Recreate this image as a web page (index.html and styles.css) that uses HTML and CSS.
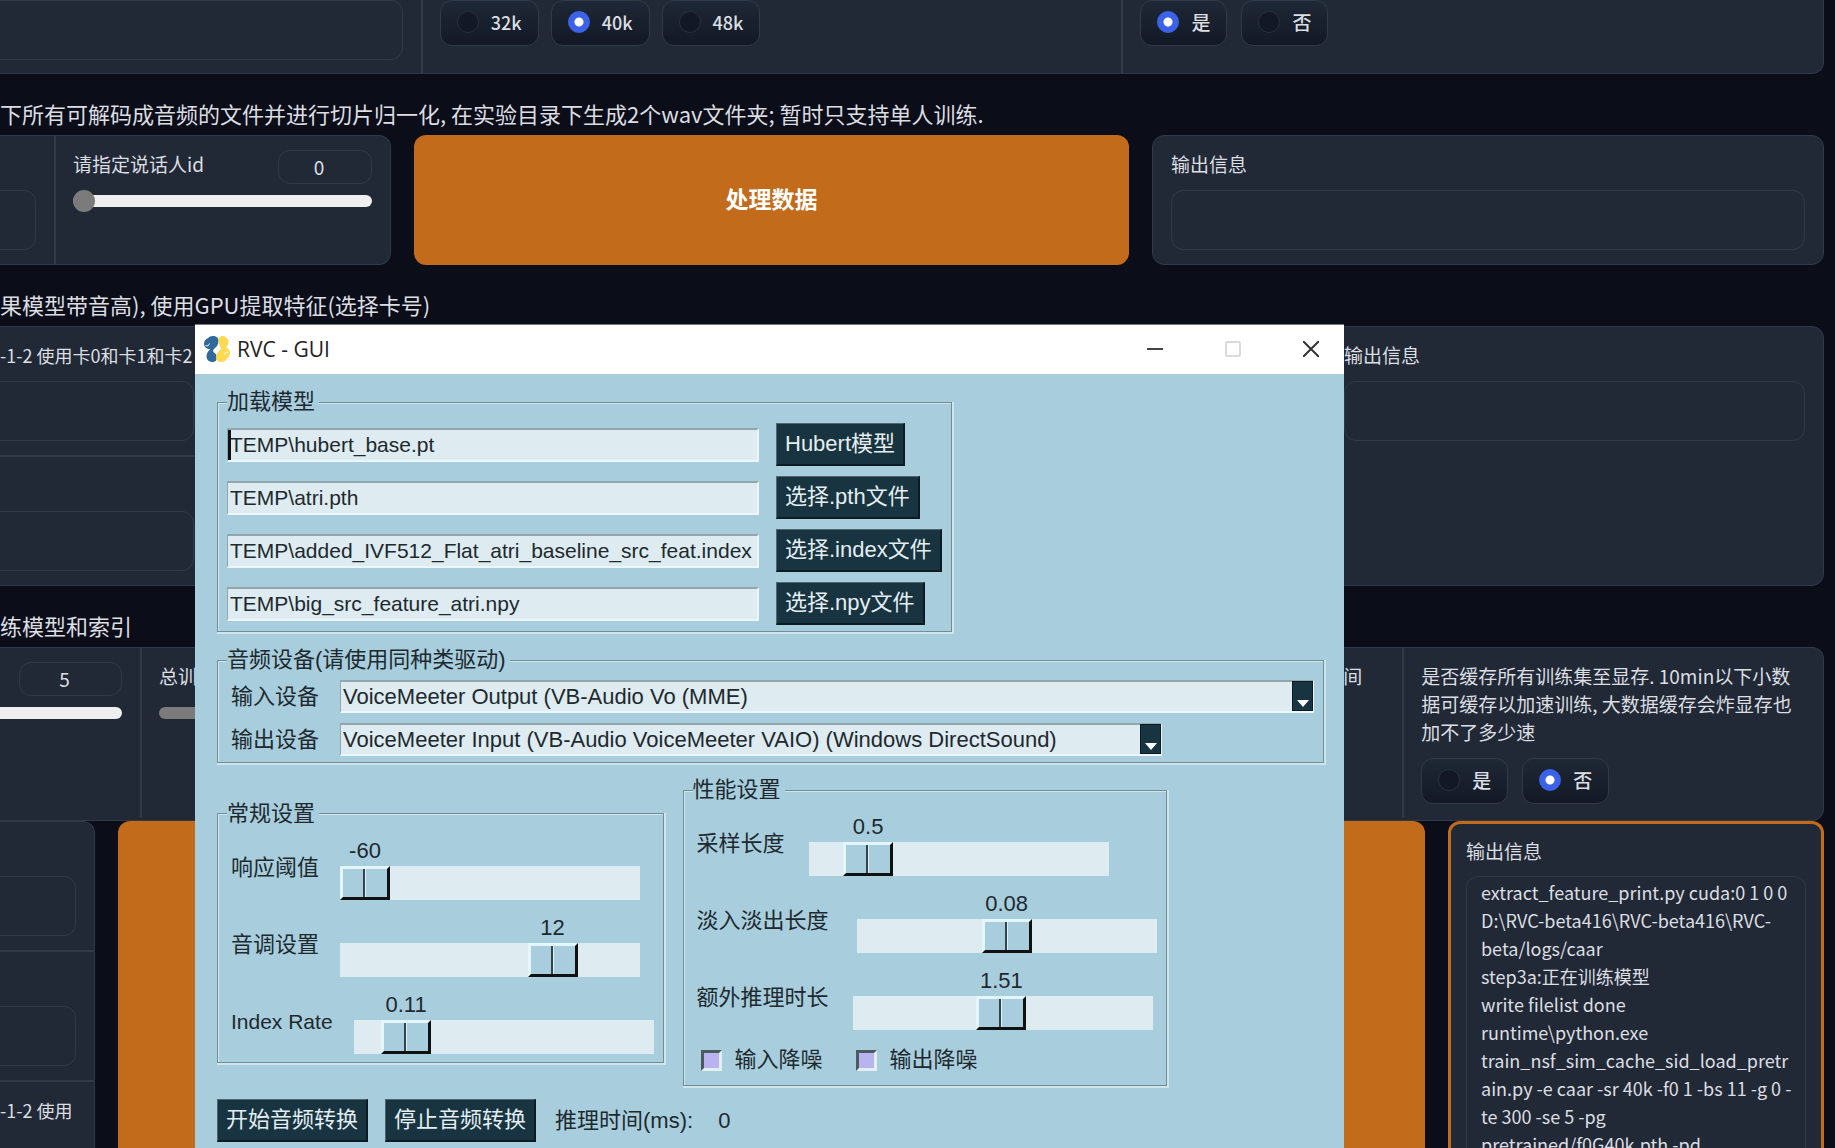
FILE: index.html
```html
<!DOCTYPE html>
<html lang="zh-CN">
<head>
<meta charset="utf-8">
<title>RVC WebUI</title>
<link rel="stylesheet" href="styles.css">
</head>
<body>
<main class="page">
  <div class="row row-basic">
    <div class="block"><input class="textbox bleed" type="text" aria-label="输入实验名"></div>
    <div class="block chips rates" role="radiogroup" aria-label="目标采样率">
      <label class="chip"><input type="radio" name="sr">32k</label>
      <label class="chip"><input type="radio" name="sr" checked>40k</label>
      <label class="chip"><input type="radio" name="sr">48k</label>
    </div>
    <div class="block chips" role="radiogroup" aria-label="模型是否带音高指导">
      <label class="chip"><input type="radio" name="f0" checked>是</label>
      <label class="chip"><input type="radio" name="f0">否</label>
    </div>
  </div>

  <p class="heading">下所有可解码成音频的文件并进行切片归一化, 在实验目录下生成2个wav文件夹; 暂时只支持单人训练.</p>
  <div class="row row-process">
    <div class="panel panel-cut cols-speaker">
      <div class="block"><div class="label"></div><input class="textbox bleed" type="text" aria-label="训练文件夹路径"></div>
      <div class="block">
        <div class="slider-head"><label class="label" for="spk">请指定说话人id</label><input class="number" type="text" value="0" aria-label="说话人id"></div>
        <input class="range" id="spk" type="range" min="0" max="4" value="0">
      </div>
    </div>
    <button class="action">处理数据</button>
    <div class="panel">
      <div class="block"><label class="label" for="out1">输出信息</label><input class="textbox" id="out1" type="text" readonly></div>
    </div>
  </div>

  <p class="heading">果模型带音高), 使用GPU提取特征(选择卡号)</p>
  <div class="row row-feature">
    <div class="panel panel-cut">
      <div class="block cut"><label class="label" for="gpus">-1-2 使用卡0和卡1和卡2</label><input class="textbox bleed" id="gpus" type="text"></div>
      <div class="block cut"><div class="label"></div><input class="textbox bleed" type="text" aria-label="显卡信息"></div>
    </div>
    <button class="action" aria-label="特征提取"></button>
    <div class="panel">
      <div class="block"><label class="label" for="out2">输出信息</label><input class="textbox" id="out2" type="text" readonly></div>
    </div>
  </div>

  <p class="heading">练模型和索引</p>
  <div class="panel panel-cut cols-train">
    <div class="block">
      <div class="slider-head"><input class="number wide" type="text" value="5" aria-label="保存频率"></div>
      <div class="bleed"><input class="range plain" type="range" min="0" max="50" value="0" aria-label="保存频率滑块"></div>
    </div>
    <div class="block">
      <div class="slider-head"><label class="label" for="epoch">总训练</label></div>
      <input class="range filled" id="epoch" type="range" min="0" max="1000" value="300">
    </div>
    <div class="block"></div>
    <div class="block"><div class="label">是否仅保存最新的ckpt文件以节省硬盘空间</div></div>
    <div class="block">
      <div class="label wrap">是否缓存所有训练集至显存. 10min以下小数<br>据可缓存以加速训练, 大数据缓存会炸显存也<br>加不了多少速</div>
      <div class="chips">
        <label class="chip"><input type="radio" name="cache">是</label>
        <label class="chip"><input type="radio" name="cache" checked>否</label>
      </div>
    </div>
  </div>

  <div class="row row-run">
    <div class="panel panel-cut">
      <div class="block cut"><div class="label"></div><input class="textbox bleed" type="text" aria-label="预训练底模G路径"></div>
      <div class="block cut"><div class="label"></div><input class="textbox bleed" type="text" aria-label="预训练底模D路径"></div>
      <div class="block cut"><div class="label">-1-2 使用</div></div>
    </div>
    <button class="action" aria-label="训练模型"></button>
    <div class="panel active">
      <label class="label" for="log">输出信息</label>
      <textarea class="log" id="log" readonly>extract_feature_print.py cuda:0 1 0 0
D:\RVC-beta416\RVC-beta416\RVC-
beta/logs/caar
step3a:正在训练模型
write filelist done
runtime\python.exe
train_nsf_sim_cache_sid_load_pretr
ain.py -e caar -sr 40k -f0 1 -bs 11 -g 0 -
te 300 -se 5 -pg
pretrained/f0G40k.pth -pd</textarea>
    </div>
  </div>
</main>

<section class="window" aria-label="RVC - GUI">
  <header class="titlebar">
    <svg class="logo" viewBox="0 0 26 26" aria-hidden="true">
      <path fill="#30699b" d="M9 0c3 0 5.500 1.500 5.500 4.500 0 3-1 5.500-3.500 7.500-2 1.600-2.500 3-1 4.500 1.400 1.400 3 2 3 4.500 0 3-1.500 5-4.500 5-3.500 0-6-2.500-6-5.500 0-2.500 1-4.500 2.500-6L6 13C3 13 0 11 0 8c0-3 1.500-4.500 3.500-5.500C5 .8 7 0 9 0z"/>
      <path fill="#ffd94f" d="M18 0c3.500 0 6.500 2.500 6.500 6 0 2-.8 3.500-2.500 5.500 2.500.8 4 2.500 4 5.500 0 2.500-1 4.500-3 5.500C22 24.500 20 26 17.500 26c-3.500 0-5.500-2-5.500-4.500 0-3 1-4.500 3-6.500 1.500-1.500 3-3 1.500-4.500C15.500 9 14.500 8 14.500 4.500 14.500 2 16 0 18 0z"/>
      <path fill="none" stroke="#fff" stroke-width="1" d="M1.500 9.500c2 1 3.500 0 4-2M24.500 16.500c-2-1-3.500 0-4 2"/>
    </svg>
    <h1>RVC - GUI</h1>
    <button class="winbtn" aria-label="最小化"><svg viewBox="0 0 16 16"><path d="M0 8h16" stroke="#444" stroke-width="2"/></svg></button>
    <button class="winbtn" aria-label="最大化" disabled><svg viewBox="0 0 16 16"><rect x="1" y="1" width="14" height="14" rx="1" fill="none" stroke="#dadada" stroke-width="2"/></svg></button>
    <button class="winbtn" aria-label="关闭"><svg viewBox="0 0 16 16"><path d="M0 0l16 16M16 0L0 16" stroke="#333" stroke-width="2"/></svg></button>
  </header>

  <div class="client">
    <fieldset class="models">
      <legend>加载模型</legend>
      <div class="file focus"><input type="text" value="TEMP\hubert_base.pt" aria-label="Hubert模型路径"><button class="tk">Hubert模型</button></div>
      <div class="file"><input type="text" value="TEMP\atri.pth" aria-label="pth路径"><button class="tk">选择.pth文件</button></div>
      <div class="file"><input type="text" value="TEMP\added_IVF512_Flat_atri_baseline_src_feat.index" aria-label="index路径"><button class="tk">选择.index文件</button></div>
      <div class="file"><input type="text" value="TEMP\big_src_feature_atri.npy" aria-label="npy路径"><button class="tk">选择.npy文件</button></div>
    </fieldset>

    <fieldset class="devices">
      <legend>音频设备(请使用同种类驱动)</legend>
      <div class="device">
        <label for="din">输入设备</label>
        <div class="combo"><select id="din"><option>VoiceMeeter Output (VB-Audio Vo (MME)</option></select><span class="arrow"></span></div>
      </div>
      <div class="device">
        <label for="dout">输出设备</label>
        <div class="combo short"><select id="dout"><option>VoiceMeeter Input (VB-Audio VoiceMeeter VAIO) (Windows DirectSound)</option></select><span class="arrow"></span></div>
      </div>
    </fieldset>

    <div class="groups">
      <fieldset>
        <legend>常规设置</legend>
        <div class="scale"><label for="s1">响应阈值</label><div><output for="s1" style="--v:0">-60</output><input id="s1" type="range" min="-60" max="0" value="-60"></div></div>
        <div class="scale"><label for="s2">音调设置</label><div><output for="s2" style="--v:0.75">12</output><input id="s2" type="range" min="-24" max="24" value="12"></div></div>
        <div class="scale"><label class="latin" for="s3">Index Rate</label><div><output for="s3" style="--v:0.11">0.11</output><input id="s3" type="range" min="0" max="1" step="0.01" value="0.11"></div></div>
      </fieldset>
      <fieldset class="perf">
        <legend>性能设置</legend>
        <div class="scale"><label for="s4">采样长度</label><div><output for="s4" style="--v:0.138">0.5</output><input id="s4" type="range" min="0.1" max="3" step="0.1" value="0.5"></div></div>
        <div class="scale"><label class="long" for="s5">淡入淡出长度</label><div><output for="s5" style="--v:0.5">0.08</output><input id="s5" type="range" min="0.01" max="0.15" step="0.01" value="0.08"></div></div>
        <div class="scale"><label for="s6">额外推理时长</label><div><output for="s6" style="--v:0.495">1.51</output><input id="s6" type="range" min="0.05" max="3" step="0.01" value="1.51"></div></div>
        <div class="checks">
          <label><input type="checkbox">输入降噪</label>
          <label><input type="checkbox">输出降噪</label>
        </div>
      </fieldset>
    </div>

    <div class="controls">
      <button class="tk">开始音频转换</button>
      <button class="tk">停止音频转换</button>
      <span class="status">推理时间(ms):</span><span>0</span>
    </div>
  </div>
</section>
</body>
</html>
```
FILE: styles.css
```css
:root {
  --page: #0b0d18;
  --panel: #212936;
  --line: #303a48;
  --orange: #c16b1b;
  --text: #dcdee2;
  --tk: #a8cede;
  --tk-field: #deebf1;
  --tk-dark: #183440;
}

* { box-sizing: border-box; }

body {
  margin: 0;
  background: var(--page);
  color: var(--text);
  font-family: "Noto Sans CJK SC", sans-serif;
  font-size: 19px;
  line-height: 28px;
}

input, button, select, textarea { font: inherit; color: inherit; margin: 0; }

/* Web page */
.page {
  display: flex;
  flex-direction: column;
  height: 100vh;
  padding-right: 11px;
  overflow: hidden;
}

.row { display: grid; gap: 23px; }
.row-basic {
  grid-template-columns: minmax(0, 421fr) minmax(0, 701fr) minmax(0, 702fr);
  gap: 0;
  background: var(--panel);
  border: 1px solid var(--line);
  border-width: 0 1px 1px 0;
  border-radius: 0 0 12px 0;
}
.row-basic .block { padding-top: 0; padding-bottom: 13px; }
.row-process { grid-template-columns: minmax(0, 391fr) minmax(0, 715fr) minmax(0, 672fr); }
.row-feature { grid-template-columns: minmax(0, 213fr) minmax(0, 1066fr) minmax(0, 499fr); }
.row-run {
  flex: 1;
  min-height: 0;
  grid-template-columns: minmax(0, 95fr) minmax(0, 1307fr) minmax(0, 376fr);
  grid-template-rows: minmax(0, 1fr);
}

.heading {
  margin: 19px 0 0;
  padding-bottom: 2px;
  font-size: 22px;
  line-height: 40px;
  white-space: nowrap;
}

.panel {
  background: var(--panel);
  border: 1px solid var(--line);
  border-radius: 12px;
  overflow: hidden;
}
.panel-cut { border-left: 0; border-radius: 0 12px 12px 0; }
.row-run .panel { border-bottom: 0; border-radius: 12px 12px 0 0; }
.row-run .panel-cut { border-radius: 0 12px 0 0; }
.panel.active { border: 3px solid var(--orange); border-bottom: 0; padding: 13px 15px 0; display: flex; flex-direction: column; }

.cols-speaker { display: grid; grid-template-columns: minmax(0, 54fr) minmax(0, 336fr); }
.cols-train { display: grid; grid-template-columns: minmax(0, 140fr) repeat(4, minmax(0, 421fr)); padding-bottom: 2px; }

.block { padding: 14px 18px; }
.block + .block { border-left: 2px solid var(--line); padding-left: 17px; }
.cut { padding-left: 0; }
.cut .label { font-size: 18px; }
.cut + .cut { border-left: 0; border-top: 2px solid var(--line); padding-left: 0; }

.label { display: block; min-height: 28px; white-space: nowrap; overflow: hidden; }

.textbox {
  display: block;
  width: 100%;
  height: 60px;
  margin-top: 12px;
  padding: 0 14px;
  background: transparent;
  border: 1px solid var(--line);
  border-radius: 12px;
}
.row-basic .textbox { margin-top: 0; }
.block > .bleed { margin-left: -36px; width: calc(100% + 36px); }

.slider-head { display: flex; justify-content: space-between; height: 34px; }
.number {
  width: 94px;
  height: 34px;
  margin-left: auto;
  padding: 0 12px 2px 0;
  text-align: center;
  background: transparent;
  border: 1px solid var(--line);
  border-radius: 12px;
}
.number.wide { width: 103px; }

.range {
  appearance: none;
  display: block;
  width: 100%;
  height: 12px;
  margin: 11px 0 0;
  background: #efefef;
  border-radius: 6px;
}
.range::-webkit-slider-thumb {
  appearance: none;
  width: 22px;
  height: 22px;
  border-radius: 50%;
  background: #7b7b7b;
}
.range.plain::-webkit-slider-thumb { background: #efefef; height: 12px; }
.range.filled { background: #7b7b7b; }

.chips { display: flex; flex-wrap: wrap; gap: 14px; align-items: flex-start; }
.rates { font-size: 18px; gap: 12px; }
.block > .chips { margin-top: 12px; }
.chip {
  display: flex;
  align-items: center;
  gap: 12px;
  height: 46px;
  padding: 0 16px 2px;
  font-weight: 500;
  background: linear-gradient(#1f2836, #121826);
  border: 1px solid var(--line);
  border-radius: 12px;
}
.chip input {
  appearance: none;
  width: 22px;
  height: 22px;
  border: 1px solid #28303d;
  border-radius: 50%;
  background: #121826;
}
.chip input:checked {
  border-color: #3c62e8;
  background: radial-gradient(circle, #fff 4px, #3c62e8 5px);
}

.action {
  padding: 0 0 4px;
  border: 0;
  border-radius: 12px;
  background: var(--orange);
  color: #fff;
  font-size: 23px;
  font-weight: 700;
}
.row-run .action { border-radius: 12px 12px 0 0; }

.log {
  flex: 1;
  min-height: 0;
  margin-top: 11px;
  padding: 1px 14px;
  font-size: 18px;
  background: transparent;
  border: 1px solid var(--line);
  border-bottom: 0;
  border-radius: 12px 12px 0 0;
  resize: none;
  overflow: hidden;
  white-space: pre;
}

/* Floating desktop window */
.window {
  position: absolute;
  left: 195px;
  top: 324px;
  bottom: 0;
  width: 1149px;
  overflow: hidden;
  background: var(--tk);
  color: #20292e;
  font-family: "Liberation Sans", "Noto Sans CJK SC", sans-serif;
  font-size: 22px;
}

.titlebar {
  display: flex;
  align-items: center;
  height: 50px;
  padding: 0 25px 2px 9px;
  background: #fff;
  border-top: 1px solid #77787c;
  color: #222;
}
.logo { width: 26px; height: 26px; }
.titlebar h1 {
  flex: 1;
  margin: 0 0 0 7px;
  font-family: "Open Sans", sans-serif;
  font-size: 21px;
  font-weight: 400;
}
.winbtn { display: flex; padding: 0; margin-left: 62px; background: none; border: 0; }
.winbtn svg { width: 16px; height: 16px; }

.client { padding: 14px 20px 0 22px; }

fieldset {
  margin: 0;
  min-width: 0;
  padding: 7px 9px 6px;
  border: 1px solid #728d98;
  box-shadow: 1px 1px 0 1px #cfe4eb, inset 1px 1px 0 #cfe4eb;
}
legend { padding: 0 4px 0 0; height: 28px; background: var(--tk); }

.models { width: fit-content; }
.file { display: flex; gap: 17px; height: 43px; align-items: center; }
.file + .file { margin-top: 10px; }
.file input {
  width: 532px;
  height: 34px;
  padding: 0 2px;
  font-size: 21px;
  background: var(--tk-field);
  border: 2px solid;
  border-color: #93a6ae #edf6f9 #edf6f9 #93a6ae;
  border-left-width: 1px;
  border-radius: 0;
}
.focus input { box-shadow: inset 3px 0 0 #111; }

.tk {
  height: 43px;
  padding: 0 8px;
  background: var(--tk-dark);
  color: #e4eef2;
  border: 2px solid;
  border-color: #4f656f #0d1c22 #0d1c22 #4f656f;
  border-width: 1px 2px 2px 1px;
  border-radius: 0;
}

.devices { margin-top: 14px; padding-top: 6px; }
.device { display: flex; align-items: center; gap: 21px; height: 33px; padding-left: 4px; }
.device + .device { margin-top: 10px; }
.combo { position: relative; flex: 1; height: 33px; }
.combo.short { flex: 0 0 822px; }
.combo select {
  appearance: none;
  width: 100%;
  height: 33px;
  padding: 0 24px 0 2px;
  background: var(--tk-field);
  border: 2px solid;
  border-color: #93a6ae #edf6f9 #edf6f9 #93a6ae;
  border-left-width: 1px;
  border-radius: 0;
}
.arrow {
  position: absolute;
  top: 1px;
  right: 1px;
  width: 21px;
  height: 30px;
  background: var(--tk-dark);
  border: 1px solid #0d1c22;
  pointer-events: none;
}
.arrow::after {
  content: "";
  position: absolute;
  left: 4px;
  top: 18px;
  border: 6px solid transparent;
  border-top: 7px solid #fff;
  border-bottom: 0;
}

.groups { display: flex; align-items: center; gap: 19px; margin-top: 13px; }
.groups fieldset { padding-top: 8px; padding-bottom: 8px; }
.scale { display: flex; align-items: center; gap: 21px; padding-left: 4px; }
.scale + .scale, .checks { margin-top: 13px; }
.perf .scale { gap: 24px; }
.latin { font-size: 21px; }
.long { min-width: 136px; }
.scale output {
  display: block;
  width: 50px;
  margin-left: calc(var(--v) * 250px);
  text-align: center;
  line-height: 30px;
}
.scale input {
  appearance: none;
  display: block;
  width: 300px;
  height: 34px;
  background: var(--tk-field);
}
.scale input::-webkit-slider-thumb {
  appearance: none;
  width: 50px;
  height: 34px;
  border: 3px solid;
  border-color: #e2f6fb #111 #111 #e2f6fb;
  background: linear-gradient(90deg, transparent 20px, #31444c 20px 22px, #dff2f8 22px 23px, transparent 23px) var(--tk);
}

.checks { display: flex; align-items: center; gap: 33px; height: 34px; padding-left: 8px; }
.checks label { display: flex; align-items: center; gap: 13px; }
.checks input {
  appearance: none;
  width: 21px;
  height: 21px;
  background: #b9b3ee;
  border: 3px solid;
  border-color: #4c5b63 #e2eff4 #e2eff4 #4c5b63;
}

.controls { display: flex; align-items: center; gap: 17px; margin-top: 13px; }
.status { margin: 0 8px 0 2px; }
```
